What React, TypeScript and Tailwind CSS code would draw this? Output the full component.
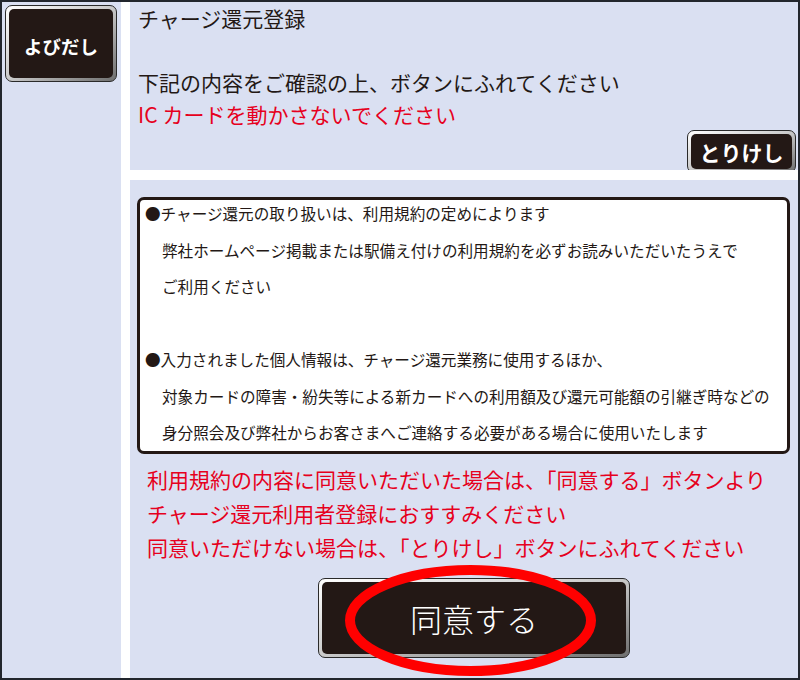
import React from 'react';

const font = { fontFamily: '"Noto Sans CJK JP", "Noto Sans", sans-serif' };

const BevelButton: React.FC<{ className?: string; innerClassName?: string; children: React.ReactNode }> = ({
    className = '',
    innerClassName = '',
    children
}) => (
    <div className={`rounded-[7px] border border-[#2a2a2a] bg-gradient-to-br from-white via-[#c9c9c9] to-[#6f6f6f] p-[3px] ${className}`}>
        <div className={`flex h-full w-full items-center justify-center rounded-[5px] bg-[#231815] text-white ${innerClassName}`}>
            {children}
        </div>
    </div>
);

export default function App() {
    const noteLines = [
        { text: '●チャージ還元の取り扱いは、利用規約の定めによります', indent: false },
        { text: '弊社ホームページ掲載または駅備え付けの利用規約を必ずお読みいただいたうえで', indent: true },
        { text: 'ご利用ください', indent: true },
        { text: '', indent: false },
        { text: '●入力されました個人情報は、チャージ還元業務に使用するほか、', indent: false },
        { text: '対象カードの障害・紛失等による新カードへの利用額及び還元可能額の引継ぎ時などの', indent: true },
        { text: '身分照会及び弊社からお客さまへご連絡する必要がある場合に使用いたします', indent: true }
    ];

    return (
        <div className="flex h-[680px] w-[800px] bg-[#22262d] p-[2px] text-[#231815]" style={font}>
            {/* left column */}
            <div className="w-[119px] bg-[#dae0f2] p-[3px]">
                <BevelButton className="h-[77px] w-[112px]" innerClassName="pt-[6px] text-[18.5px] font-bold">
                    よびだし
                </BevelButton>
            </div>

            <div className="w-[9px] bg-white" />

            {/* right column */}
            <div className="flex flex-1 flex-col">
                {/* header panel */}
                <div className="flex h-[168px] flex-col bg-[#dae0f2] pl-[8px]">
                    <div className="text-[21px] leading-[32px]">チャージ還元登録</div>
                    <div className="mt-[32px] text-[21px] leading-[32px]">下記の内容をご確認の上、ボタンにふれてください</div>
                    <div className="text-[21px] leading-[32px] text-[#e60020]">
                        <span className="mr-[5px]">IC</span>カードを動かさないでください
                    </div>
                    <BevelButton className="mt-auto mb-[2px] mr-[2px] h-[46px] w-[109px] self-end" innerClassName="pt-[3px] text-[21px] font-bold">
                        とりけし
                    </BevelButton>
                </div>

                <div className="h-[10px] bg-white" />

                {/* body panel */}
                <div className="flex-1 bg-[#dae0f2] pl-[7px] pr-[8px] pt-[17px]">
                    <div className="rounded-[7px] border-[3px] border-[#231815] bg-white pl-[5px]">
                        <div className="-mt-[5px]">
                            {noteLines.map((line, i) => (
                                <div
                                    key={i}
                                    className={`h-[36.5px] whitespace-nowrap text-[15.6px] leading-[36.5px] ${line.indent ? 'pl-[17px]' : ''}`}
                                >
                                    {line.text}
                                </div>
                            ))}
                        </div>
                    </div>

                    <div className="mt-[8px] pl-[10px] text-[21px] leading-[34px] text-[#e60020] whitespace-nowrap">
                        <div>利用規約の内容に同意いただいた場合は、「同意する」ボタンより</div>
                        <div>チャージ還元利用者登録におすすみください</div>
                        <div>同意いただけない場合は、「とりけし」ボタンにふれてください</div>
                    </div>

                    <div className="relative ml-[181px] mt-[14px] h-[80px] w-[312px]">
                        <BevelButton className="h-[80px] w-[312px]" innerClassName="text-[32px] font-light">
                            同意する
                        </BevelButton>
                        <svg
                            className="pointer-events-none absolute left-[27px] top-[-13px]"
                            width="251"
                            height="111"
                            viewBox="0 0 251 111"
                        >
                            <ellipse cx="125.5" cy="55.5" rx="120.5" ry="50.5" fill="none" stroke="#ff0000" strokeWidth="10" />
                        </svg>
                    </div>
                </div>
            </div>
        </div>
    );
}
